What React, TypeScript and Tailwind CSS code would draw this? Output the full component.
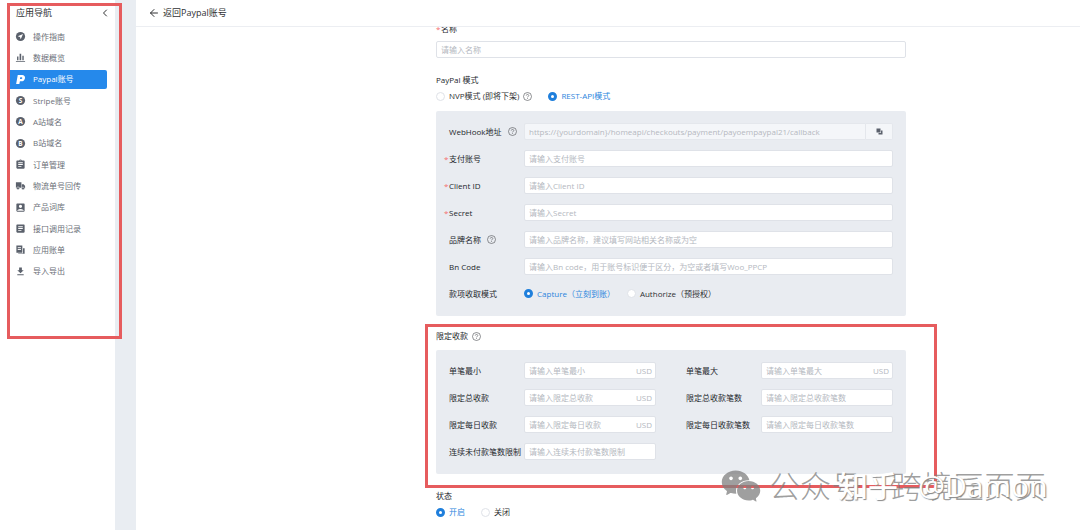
import type { ComponentType, ReactNode } from "react";
import { AiFillWechat } from "react-icons/ai";
import { FiArrowLeft, FiChevronLeft } from "react-icons/fi";
import { MdAccountBox, MdArticle, MdAssignment, MdFileDownload } from "react-icons/md";

type IconProps = { className?: string };

function GuideIcon({ className }: IconProps) {
  return (
    <svg viewBox="0 0 24 24" className={className} aria-hidden="true">
      <circle cx="12" cy="12" r="10" fill="currentColor" />
      <path d="M17.500 6.500 6 11.500l4.800 1.700 1.700 4.800z" fill="#fff" />
    </svg>
  );
}

function BarsIcon({ className }: IconProps) {
  return (
    <svg viewBox="0 0 24 24" className={className} fill="currentColor" aria-hidden="true">
      <path d="M4.500 10h3v8h-3zM10 4h3.500v14H10zM16 8h3v10h-3zM2 19.500h20v2H2z" />
    </svg>
  );
}

function PaypalIcon({ className }: IconProps) {
  return (
    <svg viewBox="0 0 24 24" className={className} fill="currentColor" aria-hidden="true">
      <path d="M6 2h9.500C20 2 22.500 5 21.800 9c-.8 4.500-4.200 7-8.300 7h-2.800L9.500 22H2.500z" />
      <path d="M11.500 7h2.500c3 0 2.300 4-.5 4h-2.700z" fill="#2589eb" />
    </svg>
  );
}

function LetterIcon({ letter, className }: IconProps & { letter: string }) {
  return (
    <svg viewBox="0 0 24 24" className={className} aria-hidden="true">
      <circle cx="12" cy="12" r="10" fill="currentColor" />
      <text x="12" y="17" textAnchor="middle" fontSize="14" fontWeight="700" fill="#fff">
        {letter}
      </text>
    </svg>
  );
}

const StripeIcon = (props: IconProps) => <LetterIcon letter="S" {...props} />;
const SiteAIcon = (props: IconProps) => <LetterIcon letter="A" {...props} />;
const SiteBIcon = (props: IconProps) => <LetterIcon letter="B" {...props} />;

function TruckIcon({ className }: IconProps) {
  return (
    <svg viewBox="0 0 24 24" className={className} fill="currentColor" aria-hidden="true">
      <path d="M2 5h12v12H2zM15 9h4l3 4v5h-7z" />
      <circle cx="6.500" cy="18" r="3" stroke="#fff" />
      <circle cx="17.500" cy="18.500" r="3" stroke="#fff" />
    </svg>
  );
}

function BillIcon({ className }: IconProps) {
  return (
    <svg viewBox="0 0 24 24" className={className} fill="currentColor" aria-hidden="true">
      <path d="M3 3h13v16H3zM17.500 9H21v12H7v-1h10.500z" />
      <path d="M6 8h7M6 12h7" stroke="#fff" strokeWidth="2" />
    </svg>
  );
}

function CopyIcon({ className }: IconProps) {
  return (
    <svg viewBox="0 0 14 14" className={className} fill="currentColor" aria-hidden="true">
      <path d="M1 1h8v8H1z" />
      <path d="M10 5h3v8H5v-3h5z" />
    </svg>
  );
}

function HelpIcon() {
  return (
    <svg
      viewBox="0 0 18 18"
      className="size-[9px] shrink-0 text-[#606266]"
      fill="none"
      stroke="currentColor"
      strokeWidth="1.4"
      aria-hidden="true"
    >
      <circle cx="9" cy="9" r="8" />
      <path d="M6.500 7.200C6.500 4 11.500 4 11.500 7.100c0 1.900-2.500 1.900-2.500 3.700M9 12.200v1.600" />
    </svg>
  );
}

const navItems: { label: string; icon: ComponentType<IconProps>; active?: boolean }[] = [
  { label: "操作指南", icon: GuideIcon },
  { label: "数据概览", icon: BarsIcon },
  { label: "Paypal账号", icon: PaypalIcon, active: true },
  { label: "Stripe账号", icon: StripeIcon },
  { label: "A站域名", icon: SiteAIcon },
  { label: "B站域名", icon: SiteBIcon },
  { label: "订单管理", icon: MdAssignment },
  { label: "物流单号回传", icon: TruckIcon },
  { label: "产品词库", icon: MdAccountBox },
  { label: "接口调用记录", icon: MdArticle },
  { label: "应用账单", icon: BillIcon },
  { label: "导入导出", icon: MdFileDownload },
];

const limits = [
  { id: "min", label: "单笔最小", unit: "USD" },
  { id: "max", label: "单笔最大", unit: "USD" },
  { id: "total", label: "限定总收款", unit: "USD" },
  { id: "totalCount", label: "限定总收款笔数" },
  { id: "daily", label: "限定每日收款", unit: "USD" },
  { id: "dailyCount", label: "限定每日收款笔数" },
  { id: "unpaid", label: "连续未付款笔数限制" },
];

const inputClass =
  "h-[17px] w-full min-w-0 rounded-xs border border-[#dfe2e8] bg-white px-1 text-[#606266] placeholder:text-[#b4b8c0] outline-none";

function Sidebar() {
  return (
    <aside className="w-[115px] shrink-0 bg-white">
      <div className="flex h-[26px] items-center justify-between pr-1 pl-4">
        <h2 className="text-[9px] text-[#303133]">应用导航</h2>
        <button type="button" aria-label="收起">
          <FiChevronLeft className="size-3 text-[#303133]" />
        </button>
      </div>
      <nav>
        <ul className="flex h-64 flex-col pr-2 pl-2.5">
          {navItems.map(({ label, icon: Icon, active }) => (
            <li key={label} className="flex flex-1 items-center">
              <a
                href="#"
                className={
                  active
                    ? "flex h-[19px] w-full items-center gap-[7px] rounded-r-xs bg-[#2589eb] pl-[5px] text-white"
                    : "flex h-[19px] w-full items-center gap-[7px] pl-[5px] text-[#6b6f78]"
                }
              >
                <Icon className={active ? "size-[11px] shrink-0" : "size-[11px] shrink-0 text-[#5b616c]"} />
                {label}
              </a>
            </li>
          ))}
        </ul>
      </nav>
    </aside>
  );
}

function Radio({
  name,
  label,
  defaultChecked,
  children,
}: {
  name: string;
  label: string;
  defaultChecked?: boolean;
  children?: ReactNode;
}) {
  return (
    <label className="flex items-center gap-1 text-[#303133] has-checked:text-[#2b85dd]">
      <input
        type="radio"
        name={name}
        defaultChecked={defaultChecked}
        className="size-[9px] shrink-0 appearance-none rounded-full border border-[#dfe2e8] bg-white checked:border-3 checked:border-[#1f7fdc]"
      />
      {label}
      {children}
    </label>
  );
}

function Field({
  id,
  label,
  required,
  help,
  children,
}: {
  id?: string;
  label: string;
  required?: boolean;
  help?: boolean;
  children: ReactNode;
}) {
  return (
    <div className="flex h-[17px] items-center">
      <label htmlFor={id} className="flex w-[75px] shrink-0 items-center whitespace-nowrap">
        {required && <span className="-ml-[5px] w-[5px] text-[#f56c6c]">*</span>}
        <span className="mr-1.5">{label}</span>
        {help && <HelpIcon />}
      </label>
      {children}
    </div>
  );
}

function AccountForm() {
  return (
    <form className="-mt-1.5 ml-[300px] max-w-[470px] text-[#24272c]">
      <label htmlFor="name" className="flex h-4 items-center">
        <span className="w-[5px] text-[#f56c6c]">*</span>名称
      </label>
      <input id="name" className={`${inputClass} mt-1`} placeholder="请输入名称" />

      <fieldset className="mt-3.5">
        <legend className="h-4 leading-4">PayPal 模式</legend>
        <div className="flex h-4 items-center gap-4">
          <Radio name="mode" label="NVP模式 (即将下架)">
            <HelpIcon />
          </Radio>
          <Radio name="mode" label="REST-API模式" defaultChecked />
        </div>
      </fieldset>

      <div className="mt-[7px] flex flex-col gap-2.5 rounded-xs bg-[#e9ecf1] px-[13px] pt-3 pb-3.5">
        <Field id="webhook" label="WebHook地址" help>
          <div className="flex flex-1">
            <input
              id="webhook"
              disabled
              readOnly
              className="h-[17px] min-w-0 flex-1 rounded-l-xs border border-[#e4e7ec] bg-[#f4f6f9] px-1 text-[#b4b8c0]"
              value="https://{yourdomain}/homeapi/checkouts/payment/payoempaypal21/callback"
            />
            <button
              type="button"
              aria-label="复制"
              className="flex h-[17px] w-[27px] items-center justify-center rounded-r-xs border border-l-0 border-[#e4e7ec] bg-[#f4f6f9] text-[#5b616c]"
            >
              <CopyIcon className="size-[7px]" />
            </button>
          </div>
        </Field>
        <Field id="account" label="支付账号" required>
          <input id="account" className={inputClass} placeholder="请输入支付账号" />
        </Field>
        <Field id="clientId" label="Client ID" required>
          <input id="clientId" className={inputClass} placeholder="请输入Client ID" />
        </Field>
        <Field id="secret" label="Secret" required>
          <input id="secret" className={inputClass} placeholder="请输入Secret" />
        </Field>
        <Field id="brand" label="品牌名称" help>
          <input id="brand" className={inputClass} placeholder="请输入品牌名称，建议填写网站相关名称或为空" />
        </Field>
        <Field id="bnCode" label="Bn Code">
          <input
            id="bnCode"
            className={inputClass}
            placeholder="请输入Bn code，用于账号标识便于区分，为空或者填写Woo_PPCP"
          />
        </Field>
        <Field label="款项收取模式">
          <div className="flex gap-3">
            <Radio name="capture" label="Capture（立刻到账）" defaultChecked />
            <Radio name="capture" label="Authorize（预授权）" />
          </div>
        </Field>
      </div>

      <h3 className="mt-3 flex h-4 items-center gap-1">
        限定收款 <HelpIcon />
      </h3>
      <div className="mt-1.5 grid grid-cols-2 gap-x-[30px] gap-y-2.5 rounded-xs bg-[#e9ecf1] px-[13px] pt-3 pb-3.5">
        {limits.map(({ id, label, unit }) => (
          <Field key={id} id={id} label={label}>
            <div className="relative min-w-0 flex-1">
              <input id={id} className={`${inputClass} block`} placeholder={`请输入${label}`} />
              {unit && (
                <span className="absolute inset-y-0 right-1 flex items-center text-[#b4b8c0]">{unit}</span>
              )}
            </div>
          </Field>
        ))}
      </div>

      <fieldset className="mt-3.5">
        <legend className="h-4 leading-4">状态</legend>
        <div className="flex h-4 items-center gap-4">
          <Radio name="status" label="开启" defaultChecked />
          <Radio name="status" label="关闭" />
        </div>
      </fieldset>
    </form>
  );
}

function Watermark() {
  return (
    <div className="pointer-events-none absolute top-[464px] left-[719px] h-11 w-[340px] whitespace-nowrap">
      <div className="absolute inset-0 flex items-center text-[31px] font-light text-[#7f7f7f]/75">
        <AiFillWechat className="mr-1.5 size-11 shrink-0" />
        公众号
        <span className="w-[29px] text-center">·</span>
        跨境匠页页
      </div>
      <div className="absolute inset-y-0 left-[119px] flex items-center gap-5 text-[30px] font-medium text-white [text-shadow:1px_1px_1px_#888]">
        <span>知乎</span>
        <span>@Damon</span>
      </div>
    </div>
  );
}

export default function App() {
  return (
    <div className="relative flex min-h-screen overflow-hidden bg-[#e9edf2] font-['Open_Sans','Noto_Sans_CJK_SC',sans-serif] text-[8px] leading-3">
      <Sidebar />
      <main className="ml-[21px] min-w-0 flex-1 bg-white">
        <header className="flex h-[27px] items-center border-b border-[#eceef2] pl-3">
          <a href="#" className="flex items-center gap-[3px] text-[9px] text-[#303133]">
            <FiArrowLeft className="size-3" />
            返回Paypal账号
          </a>
        </header>
        <div className="overflow-hidden">
          <AccountForm />
        </div>
      </main>

      {/* highlighted areas */}
      <div className="pointer-events-none absolute top-[3px] left-[7px] h-[336px] w-[115px] border-3 border-[#e65c5e]" />
      <div className="pointer-events-none absolute top-[324px] left-[425px] h-[164px] w-[512px] border-3 border-[#e65c5e]" />
      <Watermark />
    </div>
  );
}
